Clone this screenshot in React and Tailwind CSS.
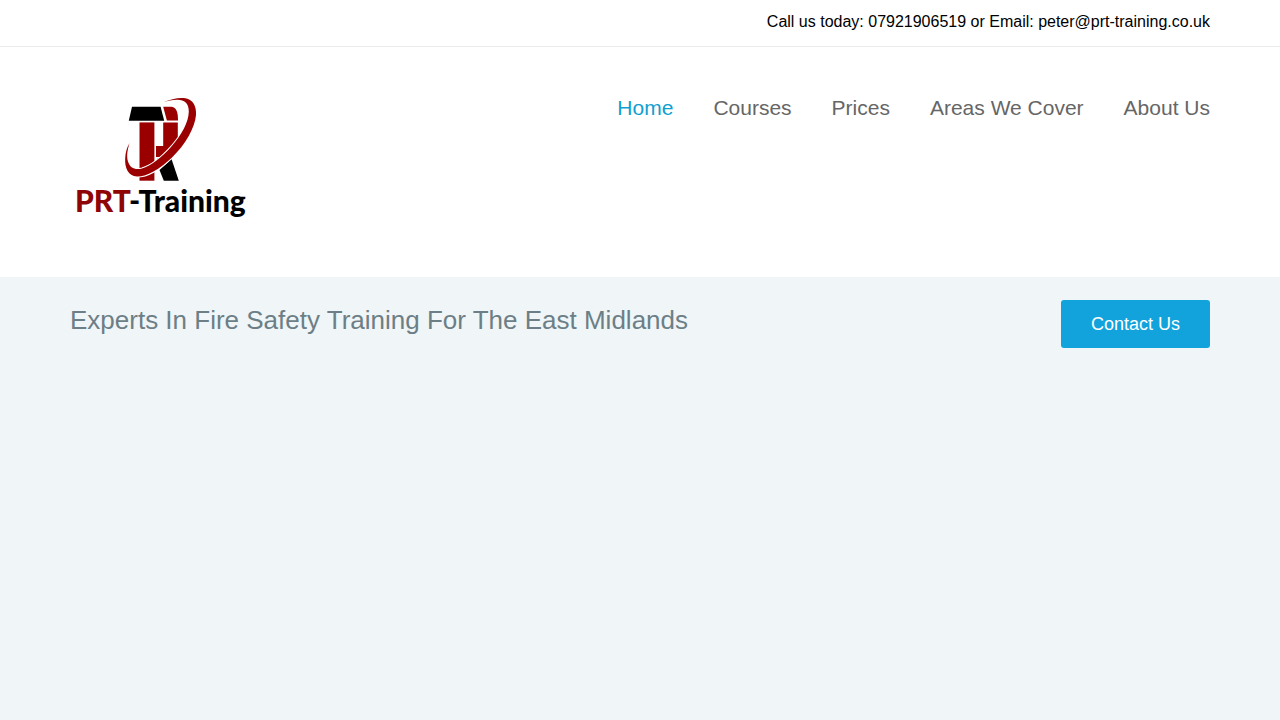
const navItems = ["Home", "Courses", "Prices", "Areas We Cover", "About Us"];

function Logo() {
  return (
    <svg
      className="w-[180px] h-[150px]"
      viewBox="70 87 180 150"
      role="img"
      aria-label="PRT-Training"
    >
      {/* T bar */}
      <path d="M132 106.7H160.6L164.2 120.7H128.8Z" fill="#000" />
      {/* P */}
      <path
        d="M163.2 106.7H171C176 107 178 111 178 120.5H166.9Z"
        fill="#9b0000"
      />
      <path d="M139.5 122.4H154.4V180.7H139.5Z" fill="#9b0000" />
      <path d="M163.2 122.4H177.8V148L168 157H156V146H163.2Z" fill="#9b0000" />
      {/* R leg */}
      <path d="M157 158.6H165L161 161.5Z" fill="#000" />
      <path d="M171.5 159L178.8 180.7H163.8L159.5 170Z" fill="#000" />
      {/* swoosh */}
      <path
        d="M163.5 102.3C171 98.8 179 97.2 185.5 98.2C193 99.6 196.6 106 196 115C195 128 185 145 172 157.5C160 169 147 176.8 137 176.6C128 176 124.6 168 125.2 158C125.6 152 126.8 147.5 129.6 143C127.4 150 126.4 156 128 161.5C130 168 135 170.2 142 168.5C151 166 162 157 171 147C182 134.5 188.6 122 188.8 111.5C188.8 102.8 184 99.6 177 99.8C172 100 168 101 163.5 102.3Z"
        fill="#9b0000"
        stroke="#fff"
        strokeWidth="2"
        paintOrder="stroke"
      />
      <text
        x="75"
        y="212"
        fontSize="30"
        fontWeight="900"
        fontFamily="Lato, sans-serif"
      >
        <tspan fill="#8f0505">PRT</tspan>
        <tspan fill="#000">-Training</tspan>
      </text>
    </svg>
  );
}

function App() {
  return (
    <div className="min-h-screen bg-[#f0f5f8] font-['Liberation_Sans',Arial,sans-serif]">
      <header className="bg-white">
        <div className="border-b border-[#ebebeb]">
          <p className="max-w-[1140px] mx-auto pt-2.5 pb-3 text-right text-base text-black">
            Call us today: 07921906519 or Email: peter@prt-training.co.uk
          </p>
        </div>
        <div className="max-w-[1140px] mx-auto py-10 flex justify-between items-start">
          <a href="#home">
            <Logo />
          </a>
          <nav className="flex gap-10 pt-[5px] text-[21px] leading-8">
            {navItems.map((item, index) => (
              <a
                key={item}
                href="#"
                className={index === 0 ? "text-[#0f9fcf]" : "text-[#666666]"}
              >
                {item}
              </a>
            ))}
          </nav>
        </div>
      </header>
      <section className="max-w-[1140px] mx-auto pt-[23px] flex justify-between items-start">
        <h1 className="text-[26px] leading-10 text-[#6c7f86]">
          Experts In Fire Safety Training For The East Midlands
        </h1>
        <button className="h-12 px-[30px] rounded-[3px] bg-[#12a3dd] text-lg text-white">
          Contact Us
        </button>
      </section>
    </div>
  );
}

export default App;
